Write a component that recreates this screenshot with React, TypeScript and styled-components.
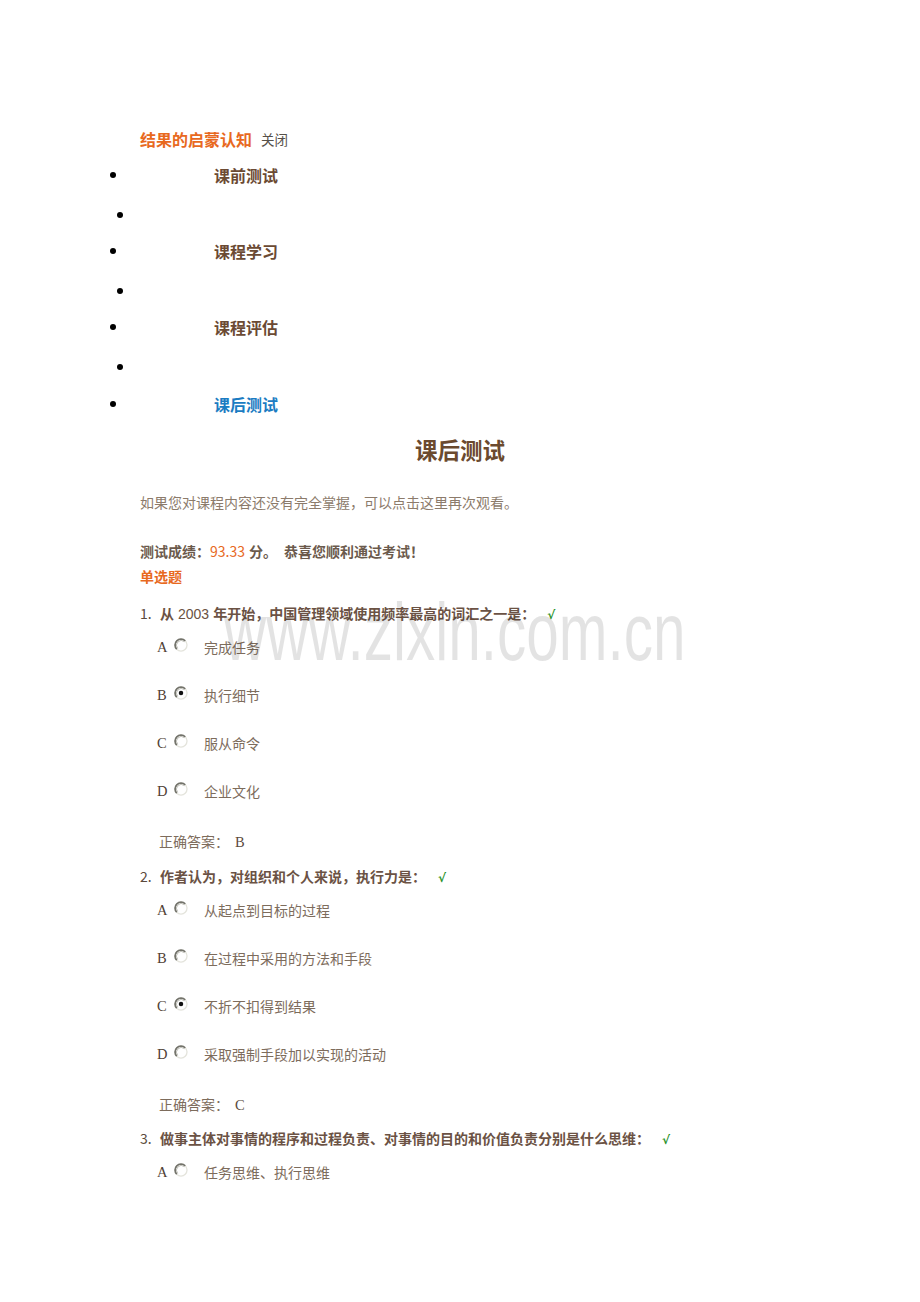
import React from "react";
import styled, { createGlobalStyle } from "styled-components";

const GlobalStyle = createGlobalStyle`
  html, body {
    margin: 0;
    padding: 0;
    background: #ffffff;
  }
  body {
    font-family: "Noto Sans CJK SC", "Liberation Sans", sans-serif;
    color: #6b5a4c;
  }
  ul { margin: 0; padding: 0; list-style: none; }
`;

const Page = styled.div`
  position: relative;
  width: 920px;
  min-height: 1302px;
  padding-top: 129px;
  box-sizing: border-box;
`;

const Header = styled.div`
  display: flex;
  align-items: center;
  gap: 9px;
  height: 20px;
  padding-left: 140px;
`;

const HeaderTitle = styled.span`
  font-size: 16px;
  font-weight: 700;
  color: #e8691e;
`;

const CloseLink = styled.span`
  font-size: 13.5px;
  color: #555049;
`;

const NavList = styled.ul`
  display: flex;
  flex-direction: column;
`;

const NavItem = styled.li<{ $empty?: boolean; $gap: number }>`
  display: flex;
  align-items: center;
  height: 20px;
  margin-top: ${(p) => p.$gap}px;
  padding-left: ${(p) => (p.$empty ? 117 : 110)}px;
`;

const Bullet = styled.span`
  width: 6px;
  height: 6px;
  border-radius: 50%;
  background: #000;
  flex-shrink: 0;
`;

const NavLabel = styled.span<{ $active?: boolean }>`
  margin-left: 98px;
  font-size: 16px;
  font-weight: 700;
  color: ${(p) => (p.$active ? "#1b7cc2" : "#6b4a33")};
`;

const Title = styled.h1`
  margin: 20px 0 0;
  height: 30px;
  line-height: 30px;
  text-align: center;
  font-size: 22.5px;
  font-weight: 700;
  color: #6b4a2e;
`;

const Content = styled.div`
  padding-left: 140px;
`;

const Intro = styled.p`
  margin: 28px 0 0;
  height: 20px;
  line-height: 20px;
  font-size: 14px;
  color: #8c7b6b;
`;

const Score = styled.p`
  margin: 29px 0 0;
  height: 20px;
  line-height: 20px;
  font-size: 14px;
  font-weight: 700;
  color: #6b5a4c;
`;

const Orange = styled.span`
  color: #e8691e;
  font-weight: 400;
`;

const Gap = styled.span<{ $w: number }>`
  display: inline-block;
  width: ${(p) => p.$w}px;
`;

const SectionLabel = styled.div`
  margin-top: 5px;
  height: 20px;
  line-height: 20px;
  font-size: 14px;
  font-weight: 700;
  color: #e8691e;
`;

const QuestionBlock = styled.section<{ $gap: number }>`
  margin-top: ${(p) => p.$gap}px;
`;

const QuestionTitle = styled.div`
  display: flex;
  align-items: baseline;
  height: 20px;
  line-height: 20px;
  font-size: 14px;
  font-weight: 700;
  color: #6b5244;
  white-space: nowrap;
`;

const QNum = styled.span`
  width: 20px;
  font-weight: 400;
  color: #5b4a3c;
`;

const Num = styled.span`
  font-family: "Liberation Sans", "Noto Sans CJK SC", sans-serif;
  font-weight: 400;
  margin: 0 4px;
`;

const Check = styled.span`
  margin-left: 12px;
  font-family: "DejaVu Sans", sans-serif;
  font-size: 12px;
  font-weight: 700;
  color: #2a922a;
`;

const OptionList = styled.ul`
  display: flex;
  flex-direction: column;
  gap: 28px;
  margin-top: 14px;
  padding-left: 17px;
`;

const OptionRow = styled.li`
  display: flex;
  align-items: center;
  height: 20px;
`;

const OptionLetter = styled.span`
  width: 17px;
  font-family: "Liberation Serif", serif;
  font-size: 14.5px;
  color: #4f4033;
`;

const RadioBox = styled.span`
  display: flex;
  width: 14px;
  height: 14px;
  margin-bottom: 4px;
`;

const OptionText = styled.span`
  margin-left: 16px;
  font-size: 14px;
  color: #7d6c5c;
`;

const Answer = styled.div`
  margin-top: 30px;
  padding-left: 19px;
  height: 20px;
  line-height: 20px;
  font-size: 14px;
  color: #7d6c5c;
`;

const AnswerLetter = styled.span`
  margin-left: 6px;
  font-family: "Liberation Serif", serif;
  font-size: 14.5px;
  color: #5b4a3c;
`;

const Watermark = styled.div`
  position: absolute;
  left: 224px;
  top: 605px;
  font-family: "Liberation Sans", Arial, sans-serif;
  font-size: 58.5px;
  line-height: 58px;
  color: rgba(0, 0, 0, 0.11);
  transform: scaleY(1.4);
  transform-origin: 0 34px;
  pointer-events: none;
  white-space: nowrap;
`;

const Radio: React.FC<{ checked?: boolean }> = ({ checked }) => (
  <RadioBox>
    <svg width="14" height="14" viewBox="0 0 13 13">
      <circle cx="6.5" cy="6.5" r="5.6" fill="#fff" stroke="#e4e4dc" strokeWidth="1.2" />
      <path
        d="M10.4 2.6 A5.5 5.5 0 0 0 2.6 10.4"
        fill="none"
        stroke="#73736b"
        strokeWidth="1.6"
      />
      <path
        d="M9.6 3.4 A4.4 4.4 0 0 0 3.4 9.6"
        fill="none"
        stroke="#b8b8b0"
        strokeWidth="0.8"
      />
      {checked && <circle cx="6.5" cy="6.5" r="2.1" fill="#111" />}
    </svg>
  </RadioBox>
);

type Q = {
  num: string;
  title: React.ReactNode;
  options: string[];
  selected?: number;
  answer?: string;
  gap: number;
};

const questions: Q[] = [
  {
    num: "1.",
    title: (
      <>
        从<Num>2003</Num>年开始，中国管理领域使用频率最高的词汇之一是：
      </>
    ),
    options: ["完成任务", "执行细节", "服从命令", "企业文化"],
    selected: 1,
    answer: "B",
    gap: 17,
  },
  {
    num: "2.",
    title: <>作者认为，对组织和个人来说，执行力是：</>,
    options: ["从起点到目标的过程", "在过程中采用的方法和手段", "不折不扣得到结果", "采取强制手段加以实现的活动"],
    selected: 2,
    answer: "C",
    gap: 15,
  },
  {
    num: "3.",
    title: <>做事主体对事情的程序和过程负责、对事情的目的和价值负责分别是什么思维：</>,
    options: ["任务思维、执行思维"],
    gap: 14,
  },
];

const letters = ["A", "B", "C", "D"];

const nav = [
  { label: "课前测试", gap: 16 },
  { empty: true, gap: 20 },
  { label: "课程学习", gap: 16 },
  { empty: true, gap: 20 },
  { label: "课程评估", gap: 16 },
  { empty: true, gap: 20 },
  { label: "课后测试", gap: 17, active: true },
];

export default function App() {
  return (
    <>
      <GlobalStyle />
      <Page>
        <Header>
          <HeaderTitle>结果的启蒙认知</HeaderTitle>
          <CloseLink>关闭</CloseLink>
        </Header>
        <NavList>
          {nav.map((n, i) => (
            <NavItem key={i} $empty={n.empty} $gap={n.gap}>
              <Bullet />
              {n.label && <NavLabel $active={n.active}>{n.label}</NavLabel>}
            </NavItem>
          ))}
        </NavList>
        <Title>课后测试</Title>
        <Content>
          <Intro>如果您对课程内容还没有完全掌握，可以点击这里再次观看。</Intro>
          <Score>
            测试成绩：<Orange>93.33</Orange>
            <Gap $w={4} />分。<Gap $w={7} />恭喜您顺利通过考试！
          </Score>
          <SectionLabel>单选题</SectionLabel>
          {questions.map((q) => (
            <QuestionBlock key={q.num} $gap={q.gap}>
              <QuestionTitle>
                <QNum>{q.num}</QNum>
                {q.title}
                <Check>√</Check>
              </QuestionTitle>
              <OptionList>
                {q.options.map((o, i) => (
                  <OptionRow key={o}>
                    <OptionLetter>{letters[i]}</OptionLetter>
                    <Radio checked={q.selected === i} />
                    <OptionText>{o}</OptionText>
                  </OptionRow>
                ))}
              </OptionList>
              {q.answer && (
                <Answer>
                  正确答案：<AnswerLetter>{q.answer}</AnswerLetter>
                </Answer>
              )}
            </QuestionBlock>
          ))}
        </Content>
        <Watermark>www.zixin.com.cn</Watermark>
      </Page>
    </>
  );
}
